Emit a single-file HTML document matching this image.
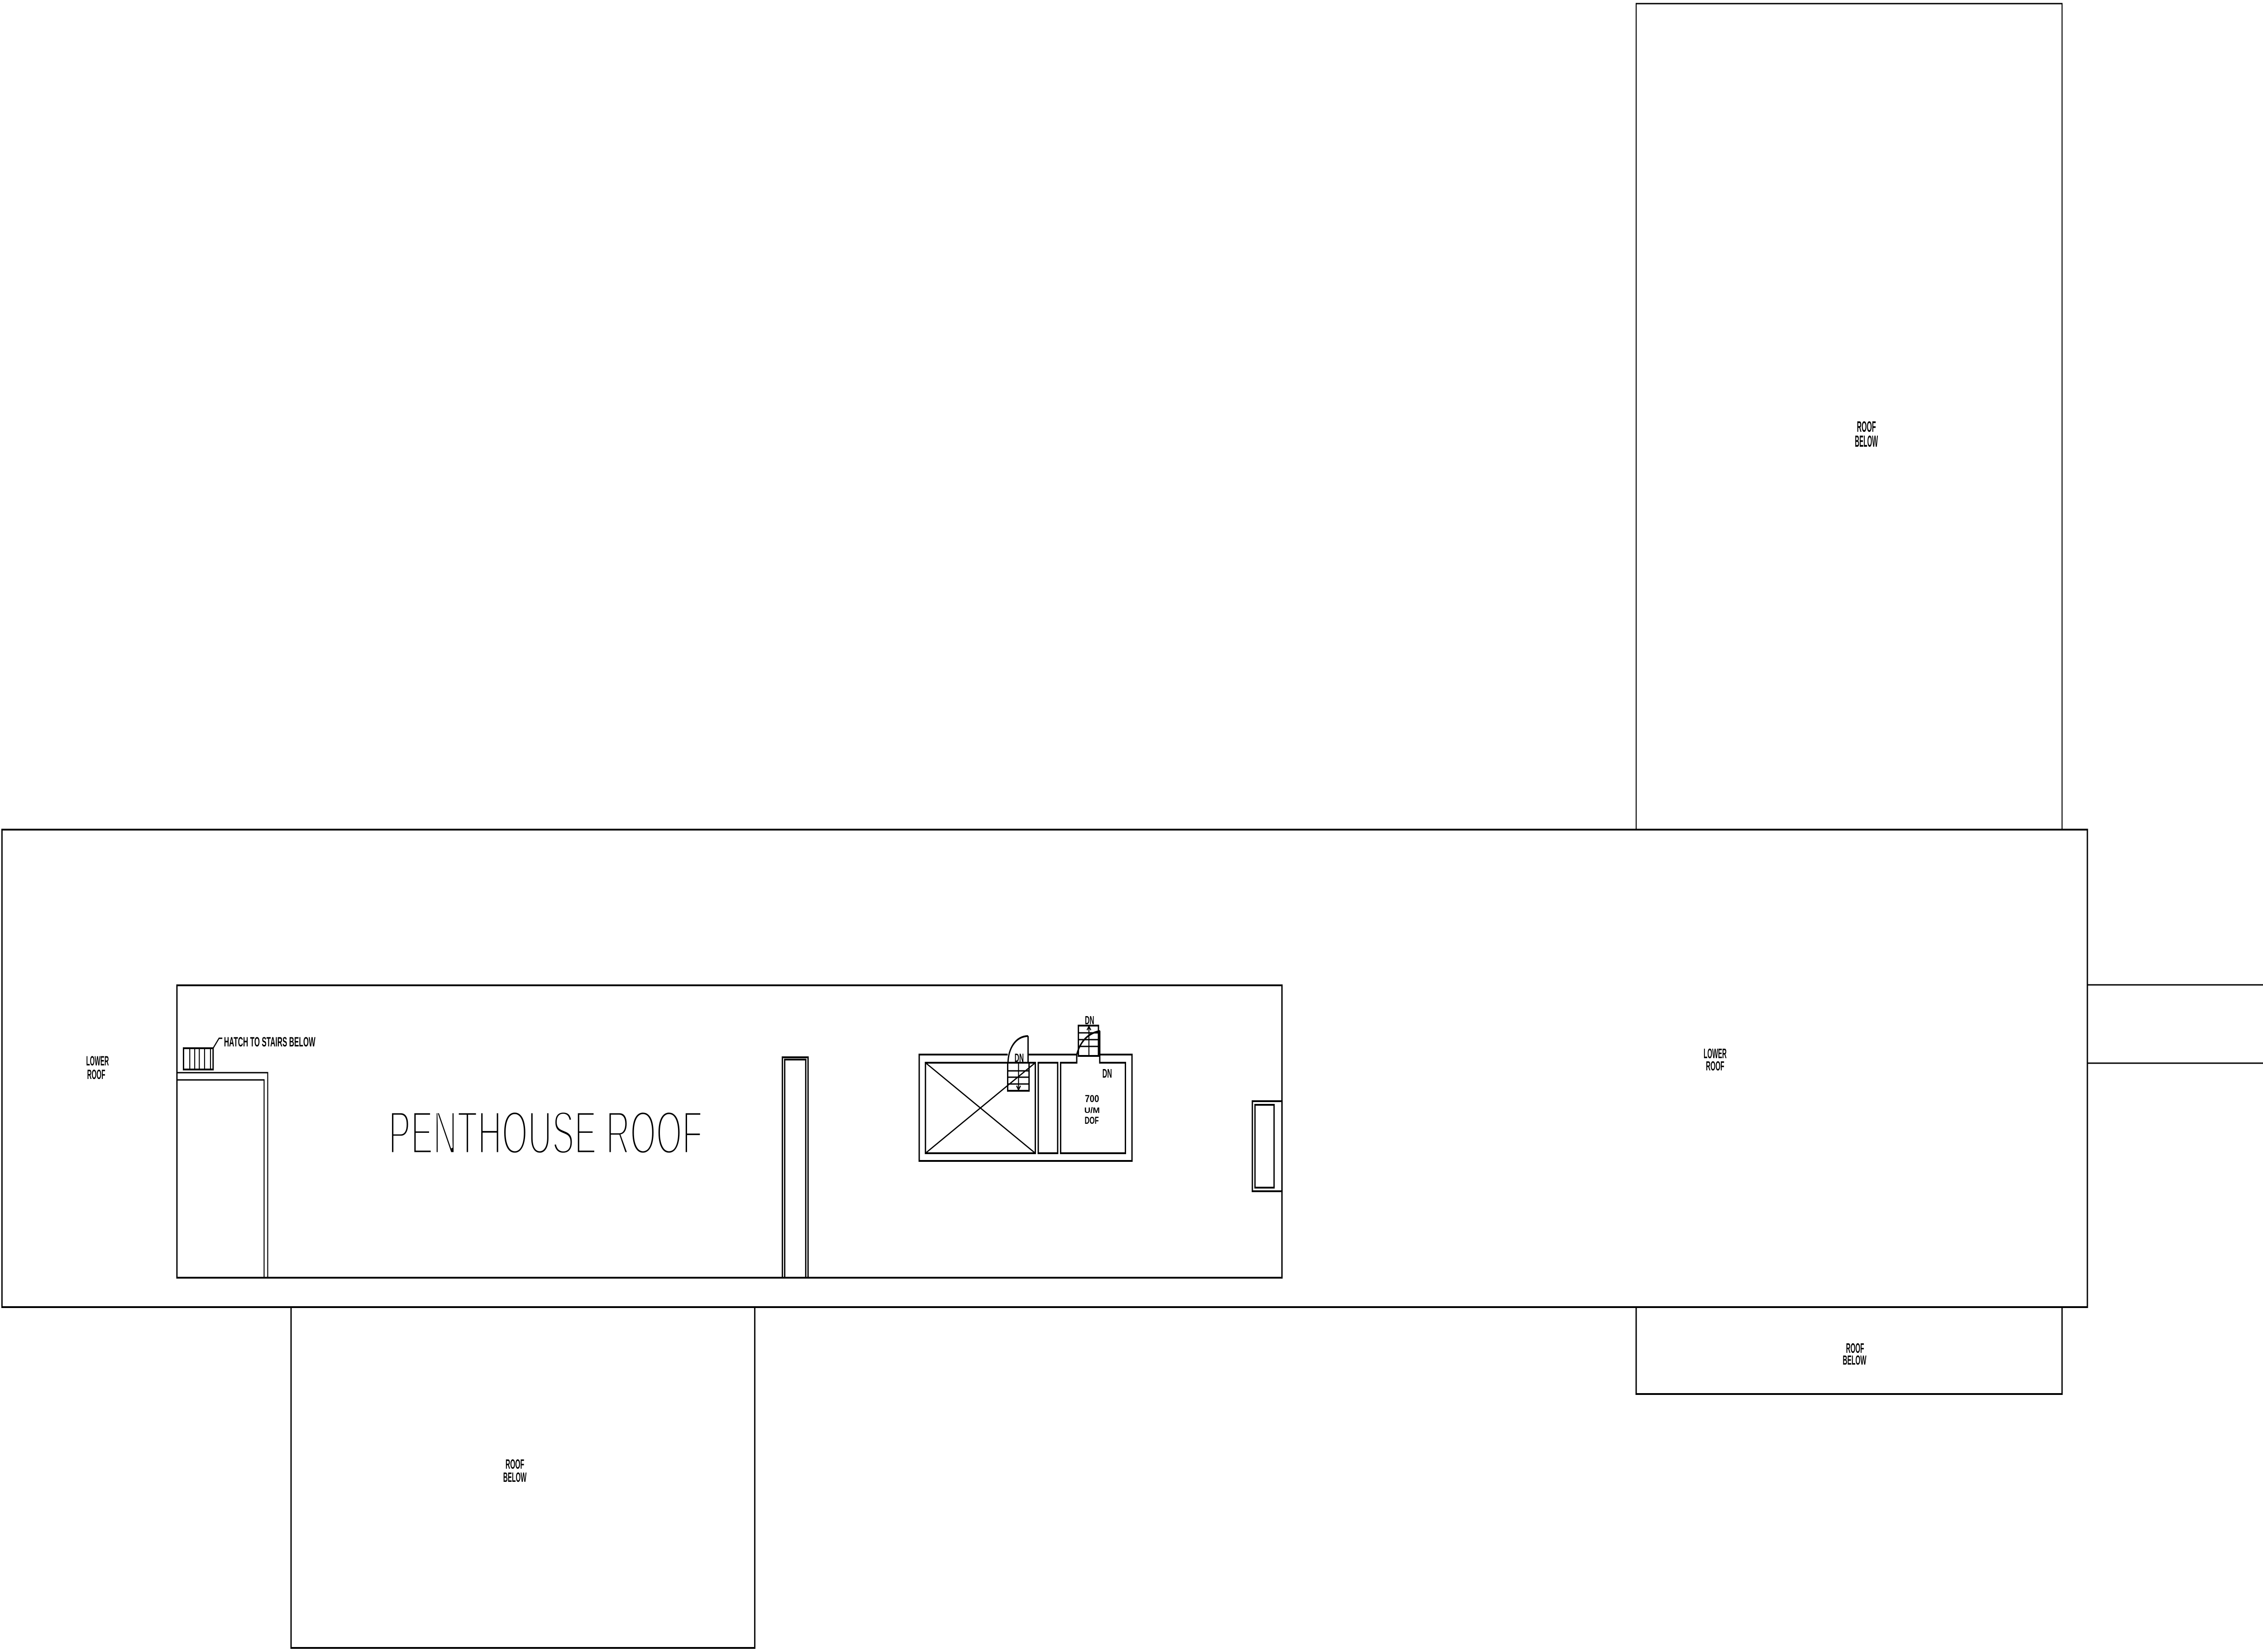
<!DOCTYPE html>
<html><head><meta charset="utf-8"><style>
html,body{margin:0;padding:0;background:#fff;width:100%;height:100%;overflow:hidden;}
svg{display:block;width:100vw;height:100vh;}
text{font-family:"Liberation Sans",sans-serif;fill:#000;}
.s{font-weight:bold;}
.t{stroke:#fff;stroke-width:7;paint-order:fill stroke;}
</style></head><body>
<svg viewBox="0 0 6881 3650" preserveAspectRatio="none" xmlns="http://www.w3.org/2000/svg">
<g fill="none" stroke="#000" stroke-width="3" stroke-linejoin="miter">
<rect x="4975" y="8" width="1295" height="1825"/>
<rect x="6" y="1833" width="6341" height="1055" stroke-width="4"/>
<rect x="885" y="2888" width="1410" height="753" stroke-width="4"/>
<rect x="4975" y="2888" width="1295" height="192" stroke-width="4"/>
<line x1="6347" y1="2176" x2="6881" y2="2176"/>
<line x1="6347" y1="2349" x2="6881" y2="2349"/>
<rect x="538" y="2177" width="3360" height="646" stroke-width="4"/>
<polyline points="538,2370 814,2370 814,2823"/>
<polyline points="538,2386 803,2386 803,2823"/>
<rect x="558" y="2316" width="90" height="47" stroke-width="4"/>
<path d="M577 2316V2363M592 2316V2363M606 2316V2363M622 2316V2363M640 2316V2363"/>
<polyline points="648,2316 666,2294 676,2294"/>
<rect x="2379" y="2336" width="78" height="487" stroke-width="4"/>
<polyline points="2386,2823 2386,2341 2450,2341 2450,2823" stroke-width="4"/>
<rect x="3808" y="2433" width="90" height="199" stroke-width="4"/>
<rect x="3816" y="2441" width="58" height="183" stroke-width="4"/>
<path d="M3064 2330H2795V2565H3442V2330H3345M3273 2330H3128" stroke-width="4"/>
<rect x="2814" y="2348" width="334" height="200" stroke-width="4"/>
<path d="M2814 2348L3148 2548M3148 2348L2814 2548"/>
<rect x="3157" y="2348" width="59" height="200" stroke-width="4"/>
<path d="M3274 2330V2348H3225V2548H3422V2348H3344V2278" stroke-width="4"/>
<rect x="3064" y="2348" width="65" height="62" stroke-width="4"/>
<path d="M3064 2366H3129M3064 2380H3129M3064 2395H3129M3097 2348V2408M3091 2399L3097 2408L3103 2399"/>
<path d="M3126 2289V2348M3065 2348C3066 2318 3086 2290 3126 2289" stroke-width="4"/>
<rect x="3279" y="2266" width="61" height="67" stroke-width="4"/>
<path d="M3279 2282H3340M3279 2297H3340M3279 2312H3340M3311 2268V2333M3305 2276L3311 2268L3317 2276"/>
<path d="M3274 2330C3285 2300 3310 2282 3345 2278" stroke-width="4"/>
</g>
<text class="t" x="1181" y="2549" font-size="135" textLength="955" lengthAdjust="spacingAndGlyphs">PENTHOUSE ROOF</text>
<g class="s">
<text class="s" x="681" y="2312" font-size="30" textLength="278" lengthAdjust="spacingAndGlyphs">HATCH TO STAIRS BELOW</text>
<text class="s" x="262" y="2354" font-size="30" textLength="69" lengthAdjust="spacingAndGlyphs">LOWER</text>
<text class="s" x="265" y="2384" font-size="30" textLength="55" lengthAdjust="spacingAndGlyphs">ROOF</text>
<text class="s" x="5180" y="2338" font-size="31" textLength="70" lengthAdjust="spacingAndGlyphs">LOWER</text>
<text class="s" x="5187" y="2365" font-size="29" textLength="56" lengthAdjust="spacingAndGlyphs">ROOF</text>
<text class="s" x="5646" y="954" font-size="33" textLength="58" lengthAdjust="spacingAndGlyphs">ROOF</text>
<text class="s" x="5640" y="987" font-size="35" textLength="70" lengthAdjust="spacingAndGlyphs">BELOW</text>
<text class="s" x="5613" y="2989" font-size="31" textLength="55" lengthAdjust="spacingAndGlyphs">ROOF</text>
<text class="s" x="5603" y="3015" font-size="29" textLength="72" lengthAdjust="spacingAndGlyphs">BELOW</text>
<text class="s" x="1537" y="3245" font-size="30" textLength="57" lengthAdjust="spacingAndGlyphs">ROOF</text>
<text class="s" x="1530" y="3274" font-size="30" textLength="71" lengthAdjust="spacingAndGlyphs">BELOW</text>
<text class="s" x="3085" y="2346" font-size="26" textLength="28" lengthAdjust="spacingAndGlyphs">DN</text>
<text class="s" x="3299" y="2263" font-size="26" textLength="28" lengthAdjust="spacingAndGlyphs">DN</text>
<text class="s" x="3352" y="2381" font-size="28" textLength="29" lengthAdjust="spacingAndGlyphs">DN</text>
<text class="s" x="3299" y="2435" font-size="22" textLength="43" lengthAdjust="spacingAndGlyphs">700</text>
<text class="s" x="3297" y="2459" font-size="18" textLength="47" lengthAdjust="spacingAndGlyphs">U/M</text>
<text class="s" x="3298" y="2483" font-size="22" textLength="43" lengthAdjust="spacingAndGlyphs">DOF</text>
</g>
</svg>
</body></html>
